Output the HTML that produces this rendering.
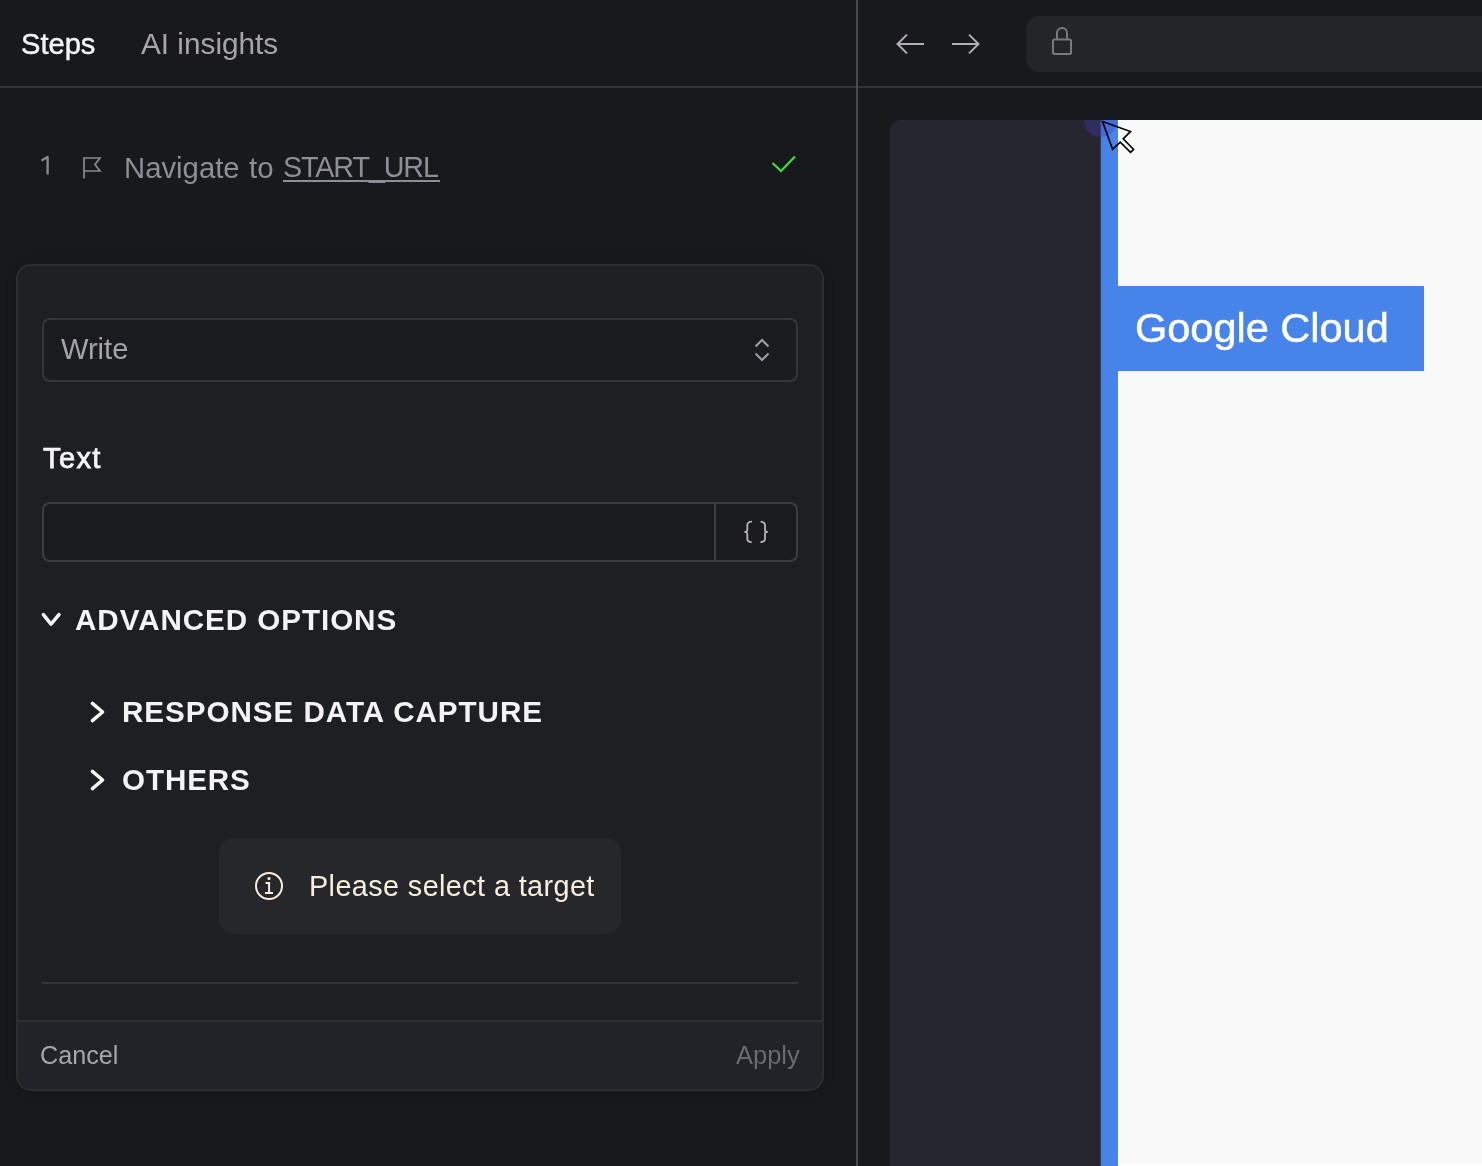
<!DOCTYPE html>
<html>
<head>
<meta charset="utf-8">
<style>
html,body{margin:0;padding:0;}
body{width:1482px;height:1166px;overflow:hidden;position:relative;background:#18191d;font-family:"Liberation Sans",sans-serif;}
.a{position:absolute;white-space:nowrap;line-height:1;will-change:transform;}
svg{position:absolute;overflow:visible;}
</style>
</head>
<body>
<!-- header -->
<div class="a" style="left:21px;top:30px;font-size:29.1px;color:#f4f4f6;-webkit-text-stroke:0.45px #f4f4f6;">Steps</div>
<div class="a" style="left:140.5px;top:28.6px;font-size:29.76px;color:#a9a4ab;">AI insights</div>
<div class="a" style="left:0;top:86px;width:1482px;height:2px;background:#30313a;"></div>
<div class="a" style="left:856px;top:0;width:2px;height:1166px;background:#48484e;"></div>

<!-- step row -->
<svg style="left:0;top:0" width="1" height="1"><path d="M41.5 160.5 L47.6 157 V174.6" fill="none" stroke="#8b8990" stroke-width="2.3" stroke-linejoin="round"/></svg>
<svg style="left:0;top:0" width="1" height="1">
  <path d="M84 178.5 V158 H100 L95 164.5 L100 171 H84" fill="none" stroke="#8b8990" stroke-width="1.7"/>
</svg>
<div class="a" style="left:123.8px;top:152.8px;font-size:29.3px;color:#8f8d97;">Navigate</div>
<div class="a" style="left:248.8px;top:153px;font-size:29.4px;color:#8f8d97;">to</div>
<div class="a" style="left:283.2px;top:153px;font-size:28.7px;letter-spacing:-1.1px;color:#8f8d97;">START_URL</div>
<div class="a" style="left:283px;top:180px;width:157px;height:2px;background:#8f8d97;"></div>
<svg style="left:0;top:0" width="1" height="1">
  <path d="M772.5 163 L781 171 L795 156.5" fill="none" stroke="#40e040" stroke-width="2.2"/>
</svg>

<!-- card -->
<div class="a" style="left:16px;top:264px;width:804px;height:823px;border:2px solid #2c2d32;border-radius:15px;background:#1e1f23;overflow:hidden;box-shadow:0 0 12px rgba(0,0,0,0.15);">
  <div class="a" style="left:0;top:754px;width:804px;height:69px;background:#222328;border-top:2px solid #2e2f34;"></div>
</div>

<!-- select -->
<div class="a" style="left:42px;top:318px;width:752px;height:60px;border:2px solid #34353b;border-radius:8px;background:#1a1b1f;"></div>
<div class="a" style="left:61px;top:335.4px;font-size:29.1px;color:#a7a2aa;">Write</div>
<svg style="left:0;top:0" width="1" height="1">
  <path d="M755.5 346.5 L762 340 L768.5 346.5 M755.5 353.5 L762 360 L768.5 353.5" fill="none" stroke="#98a0a8" stroke-width="2"/>
</svg>

<!-- text label -->
<div class="a" style="left:43.3px;top:443.7px;font-size:29.2px;letter-spacing:1.3px;-webkit-text-stroke:0.75px #f4f4f6;color:#f4f4f6;">Text</div>

<!-- input -->
<div class="a" style="left:42px;top:502px;width:752px;height:56px;border:2px solid #3a3c41;border-radius:8px;background:#1a1b1f;"></div>
<div class="a" style="left:714px;top:504px;width:2px;height:56px;background:#3a3c41;"></div>
<svg style="left:0;top:0" width="1" height="1">
  <path d="M751.2 521.7 Q747.3 522.3 747.3 525 V530 Q747.3 531.9 744.4 531.9 Q747.3 531.9 747.3 534 V539 Q747.3 541.6 751 542.1 M761.3 521.7 Q765 522.6 765 525 V530 Q765 531.9 767.8 531.9 Q765 531.9 765 534 V539 Q765 541.5 761.1 542.1" fill="none" stroke="#b9b1bc" stroke-width="1.8" stroke-linecap="round"/>
</svg>

<!-- advanced options -->
<svg style="left:0;top:0" width="1" height="1">
  <path d="M43.4 614.6 L51 624.2 L59 614.6" fill="none" stroke="#f3f3f5" stroke-width="3.5" stroke-linecap="round" stroke-linejoin="round"/>
  <path d="M92.4 703.3 L102.6 712 L92.4 720.7" fill="none" stroke="#f3f3f5" stroke-width="3.5" stroke-linecap="round" stroke-linejoin="round"/>
  <path d="M92.4 771.3 L102.6 780 L92.4 788.7" fill="none" stroke="#f3f3f5" stroke-width="3.5" stroke-linecap="round" stroke-linejoin="round"/>
</svg>
<div class="a" style="left:75px;top:604.5px;font-size:29.6px;font-weight:bold;letter-spacing:0.95px;color:#f3f3f5;">ADVANCED OPTIONS</div>
<div class="a" style="left:121.6px;top:696.5px;font-size:29.6px;font-weight:bold;letter-spacing:0.97px;color:#f3f3f5;">RESPONSE DATA CAPTURE</div>
<div class="a" style="left:122px;top:764.5px;font-size:29.6px;font-weight:bold;letter-spacing:0.9px;color:#f3f3f5;">OTHERS</div>

<!-- toast -->
<div class="a" style="left:219px;top:838px;width:402px;height:96px;border-radius:15px;background:#26272b;"></div>
<svg style="left:0;top:0" width="1" height="1">
  <circle cx="269" cy="886" r="13" fill="none" stroke="#f7eedb" stroke-width="2"/>
  <circle cx="269" cy="878.5" r="1.6" fill="#f7eedb"/>
  <path d="M265.6 883 H269.1 V893 M265 893 H273" fill="none" stroke="#f7eedb" stroke-width="2"/>
</svg>
<div class="a" style="left:309px;top:871.8px;font-size:28.8px;letter-spacing:0.4px;color:#f7eedb;">Please select a target</div>

<!-- divider -->
<div class="a" style="left:42px;top:982px;width:756px;height:2px;background:#33343c;"></div>

<!-- footer text -->
<div class="a" style="left:39.5px;top:1042.8px;font-size:25.2px;color:#a9a4ad;">Cancel</div>
<div class="a" style="left:735.5px;top:1042.8px;font-size:25.5px;color:#6b6a72;">Apply</div>

<!-- browser header -->
<svg style="left:0;top:0" width="1" height="1">
  <path d="M924 44 H897 M907 34.6 L897.5 44 L907 53.4" fill="none" stroke="#b3adb6" stroke-width="2"/>
  <path d="M952 44 H979 M969 34.6 L978.5 44 L969 53.4" fill="none" stroke="#b3adb6" stroke-width="2"/>
</svg>
<div class="a" style="left:1026px;top:16px;width:480px;height:56px;border-radius:14px;background:#242529;"></div>
<svg style="left:0;top:0" width="1" height="1">
  <rect x="1053" y="39.5" width="18" height="14.5" rx="1.5" fill="none" stroke="#7b7980" stroke-width="2"/>
  <path d="M1057 39.5 V33 A5 5 0 0 1 1067 33 V39.5" fill="none" stroke="#7b7980" stroke-width="2"/>
</svg>

<!-- browser content -->
<div class="a" style="left:890px;top:120px;width:600px;height:1100px;border-radius:10px 0 0 0;background:#252630;overflow:hidden;">
  <div class="a" style="left:210px;top:0;width:1px;height:1100px;background:#3d3e46;"></div>
  <div class="a" style="left:211px;top:0;width:17px;height:1100px;background:#4684ea;"></div>
  <div class="a" style="left:228px;top:0;width:1px;height:1100px;background:#ffffff;"></div>
  <div class="a" style="left:229px;top:0;width:400px;height:1100px;background:#f9f9f9;"></div>
  <div class="a" style="left:228px;top:1044px;width:400px;height:2px;background:#ffffff;"></div>
  <div class="a" style="left:211px;top:166px;width:323px;height:85px;background:#4684ea;"></div>
  <div class="a" style="left:245px;top:187px;font-size:41.5px;color:#ffffff;-webkit-text-stroke:0.5px #fff;">Google Cloud</div>
  <div class="a" style="left:194px;top:-16.5px;width:33px;height:33px;border-radius:50%;background:rgba(70,60,190,0.35);"></div>
</div>
<svg style="left:0;top:0" width="1" height="1">
  <path d="M1102.5 121.5 L1130.5 131.5 L1123.2 138.8 L1133.6 149.4 L1130.5 152.3 L1120.3 142.1 L1112.6 149.2 Z" fill="none" stroke="#000" stroke-width="1.65" stroke-linejoin="miter"/>
</svg>
</body>
</html>
